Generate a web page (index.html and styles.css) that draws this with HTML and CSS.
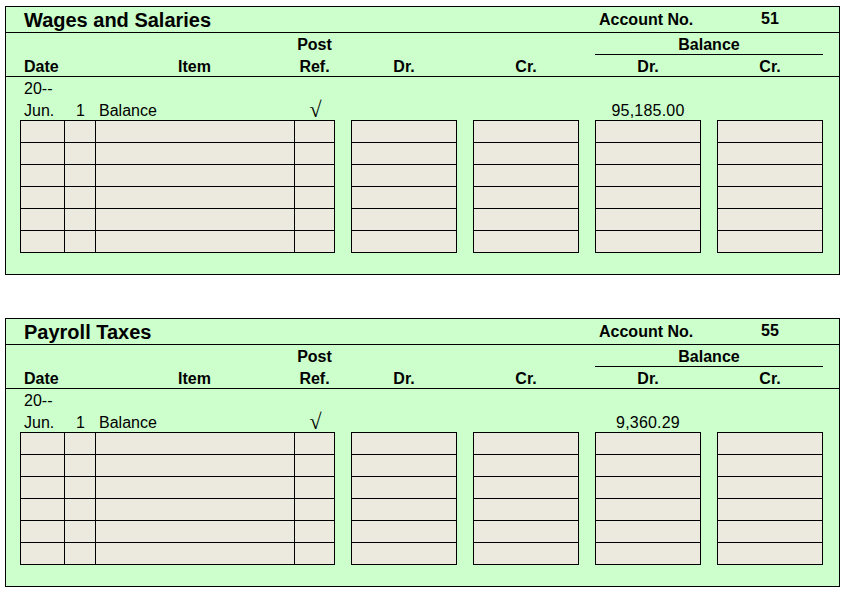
FILE: index.html
```html
<!DOCTYPE html>
<html>
<head>
<meta charset="utf-8">
<link rel="stylesheet" href="styles.css">
</head>
<body>
<div class="ledger">
  <div class="title-row">
    <div class="title">Wages and Salaries</div>
    <div class="acct-label">Account No.</div>
    <div class="acct-num">51</div>
  </div>
  <div class="head">
    <div class="c-ref r1">Post</div>
    <div class="c-bal bal-head">Balance</div>
    <div class="c-date r2">Date</div>
    <div class="c-item r2">Item</div>
    <div class="c-ref r2">Ref.</div>
    <div class="c-dr r2">Dr.</div>
    <div class="c-cr r2">Cr.</div>
    <div class="c-bdr r2">Dr.</div>
    <div class="c-bcr r2">Cr.</div>
  </div>
  <div class="body">
    <div class="c-date r1">20--</div>
    <div class="c-date r2">Jun.</div>
    <div class="c-day r2">1</div>
    <div class="c-item pad r2">Balance</div>
    <div class="c-ref check r2">√</div>
    <div class="c-bdr amt r2">95,185.00</div>
  </div>
  <div class="boxes">
    <div class="box box-main">
      <i></i><i></i><i></i><i></i>
      <i></i><i></i><i></i><i></i>
      <i></i><i></i><i></i><i></i>
      <i></i><i></i><i></i><i></i>
      <i></i><i></i><i></i><i></i>
      <i></i><i></i><i></i><i></i>
    </div>
    <div class="box"><i></i><i></i><i></i><i></i><i></i><i></i></div>
    <div class="box"><i></i><i></i><i></i><i></i><i></i><i></i></div>
    <div class="box"><i></i><i></i><i></i><i></i><i></i><i></i></div>
    <div class="box"><i></i><i></i><i></i><i></i><i></i><i></i></div>
  </div>
</div>

<div class="ledger">
  <div class="title-row">
    <div class="title">Payroll Taxes</div>
    <div class="acct-label">Account No.</div>
    <div class="acct-num">55</div>
  </div>
  <div class="head">
    <div class="c-ref r1">Post</div>
    <div class="c-bal bal-head">Balance</div>
    <div class="c-date r2">Date</div>
    <div class="c-item r2">Item</div>
    <div class="c-ref r2">Ref.</div>
    <div class="c-dr r2">Dr.</div>
    <div class="c-cr r2">Cr.</div>
    <div class="c-bdr r2">Dr.</div>
    <div class="c-bcr r2">Cr.</div>
  </div>
  <div class="body">
    <div class="c-date r1">20--</div>
    <div class="c-date r2">Jun.</div>
    <div class="c-day r2">1</div>
    <div class="c-item pad r2">Balance</div>
    <div class="c-ref check r2">√</div>
    <div class="c-bdr amt r2">9,360.29</div>
  </div>
  <div class="boxes">
    <div class="box box-main">
      <i></i><i></i><i></i><i></i>
      <i></i><i></i><i></i><i></i>
      <i></i><i></i><i></i><i></i>
      <i></i><i></i><i></i><i></i>
      <i></i><i></i><i></i><i></i>
      <i></i><i></i><i></i><i></i>
    </div>
    <div class="box"><i></i><i></i><i></i><i></i><i></i><i></i></div>
    <div class="box"><i></i><i></i><i></i><i></i><i></i><i></i></div>
    <div class="box"><i></i><i></i><i></i><i></i><i></i><i></i></div>
    <div class="box"><i></i><i></i><i></i><i></i><i></i><i></i></div>
  </div>
</div>
</body>
</html>
```

FILE: styles.css
```css
html, body {
  margin: 0;
  background: #ffffff;
}
body {
  padding: 6px 0 0 5px;
  font-family: "Liberation Sans", Arial, sans-serif;
  font-size: 16px;
  color: #000;
}
.ledger {
  width: 833px;
  border: 1px solid #000;
  background: #ccffcc;
  margin-bottom: 43px;
  padding-bottom: 21px;
}
.ledger:last-child { margin-bottom: 0; }

.title-row {
  display: grid;
  grid-template-columns: 589px 106px 16px 106px;
  grid-template-rows: 24px;
  align-items: start;
  height: 24px;
  padding-top: 1px;
  border-bottom: 1px solid #000;
}
.title {
  font-size: 20px;
  font-weight: bold;
  line-height: 25px;
  padding-left: 18px;
}
.acct-label {
  font-weight: bold;
  padding-left: 4px;
  white-space: nowrap;
  line-height: 23px;
}
.acct-num {
  grid-column: 4;
  font-weight: bold;
  text-align: center;
  line-height: 21px;
}

.head, .body {
  display: grid;
  grid-template-columns: 14px 44px 31px 199px 41px 16px 106px 16px 106px 16px 106px 16px 106px;
}
.head {
  height: 41px;
  padding-top: 2px;
  border-bottom: 1px solid #000;
  font-weight: bold;
  grid-template-rows: 20px 21px;
  line-height: 20px;
}
.head > div { text-align: center; }
.head .c-date { text-align: left; padding-left: 4px; }
.head .r2 { padding-top: 2px; }
.r1 { grid-row: 1; }
.r2 { grid-row: 2; }
.bal-head {
  grid-row: 1;
  box-sizing: border-box;
  height: 20px;
  line-height: 19px;
  border-bottom: 1px solid #000;
}
.c-date { grid-column: 2; }
.c-day { grid-column: 3; text-align: right; padding-right: 10px; }
.c-item { grid-column: 4; }
.c-ref { grid-column: 5; text-align: center; }
.c-dr { grid-column: 7; }
.c-cr { grid-column: 9; }
.c-bal { grid-column: 11 / 14; }
.c-bdr { grid-column: 11; text-align: center; }
.c-bcr { grid-column: 13; }

.body {
  height: 41px;
  padding-top: 2px;
  grid-template-rows: 22px 19px;
  line-height: 20px;
}
.body .c-date { padding-left: 4px; }
.pad { padding-left: 4px; }
.amt { letter-spacing: 0.2px; }
.check {
  font-family: "Liberation Serif", "Times New Roman", serif;
  font-size: 22px;
  line-height: 17px;
  padding-left: 2px;
}

.boxes {
  display: flex;
  gap: 16px;
  padding-left: 14px;
}
.box {
  display: grid;
  grid-template-columns: 104px;
  grid-auto-rows: 21px;
  gap: 1px;
  padding: 1px;
  background: #000;
}
.box-main {
  grid-template-columns: 43px 30px 198px 39px;
}
.box i {
  display: block;
  background: #ece9df;
}
```
